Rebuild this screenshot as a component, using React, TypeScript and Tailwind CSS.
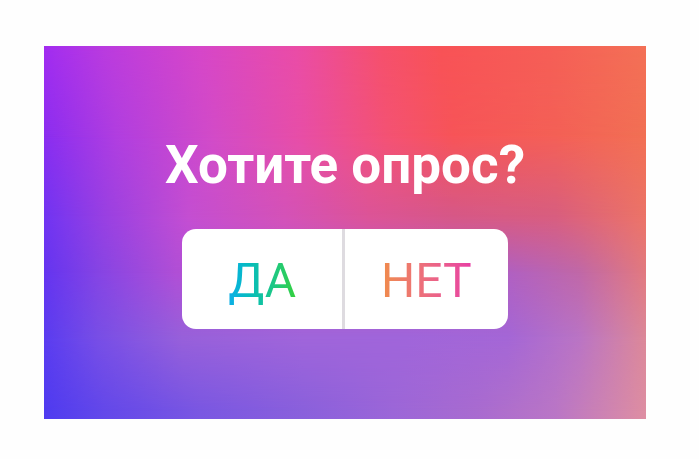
import React from 'react';

// Horizontal colour bands, from the bottom edge of the card up to the top one.
// Every band fades into the one below it through its mask.
const bands = [
  'bg-[linear-gradient(90deg,#4f3bf0_0%,#6348ea_10%,#7a57e2_26%,#8a60dc_43%,#9c66d8_58%,#a96bd0_72%,#ba76c6_85%,#de8ea2_100%)]',
  'bg-[linear-gradient(90deg,#5a3cf0_0%,#784ee6_9%,#9860da_23%,#a065da_43%,#a065da_60%,#a466d6_77%,#ba74c4_89%,#dc8898_100%)] [mask-image:linear-gradient(180deg,#000_78%,transparent_98%)]',
  'bg-[linear-gradient(90deg,#6434f0_0%,#8544e4_9%,#b04fd6_22%,#b855cc_43%,#b85ac4_60%,#b060c2_77%,#c068a8_89%,#e27a80_100%)] [mask-image:linear-gradient(180deg,#000_61%,transparent_78%)]',
  'bg-[linear-gradient(90deg,#7034f2_0%,#9840e2_10%,#c44ed2_24%,#d452b8_40%,#dc5498_54%,#d65888_68%,#d85e80_85%,#ec7468_100%)] [mask-image:linear-gradient(180deg,#000_46%,transparent_61%)]',
  'bg-[linear-gradient(90deg,#8a2df0_0%,#b03ee0_12%,#d24bc8_28%,#e84ea6_43%,#f45274_57%,#f75458_68%,#f46056_85%,#f27054_100%)] [mask-image:linear-gradient(180deg,#000_24%,transparent_46%)]',
  'bg-[linear-gradient(90deg,#a22cf0_0%,#ba3bde_10%,#d646c8_26%,#ea4ca6_42%,#f5506c_56%,#f85256_66%,#f55e56_84%,#f37056_100%)] [mask-image:linear-gradient(180deg,#000_0%,transparent_25%)]',
];

const options = [
  { label: 'ДА', gradient: 'from-[#10aee8] to-[#34d034]' },
  { label: 'НЕТ', gradient: 'from-[#f08c48] to-[#e83ca4]' },
];

const PollPage = () => {
  return (
    <main className="flex min-h-screen bg-[#fefefe] pt-[46px] pr-[53px] pb-10 pl-11 font-[Roboto,'Liberation_Sans',sans-serif]">
      <section className="relative isolate flex flex-1 flex-col items-center justify-center gap-[34px] pb-0.5">
        {bands.map((band) => (
          <div key={band} className={`absolute inset-0 -z-10 ${band}`} />
        ))}
        <h1 className="text-[53px] leading-[60px] font-bold text-white">
          Хотите опрос?
        </h1>
        <div className="grid w-[54%] grid-cols-2 divide-x-3 divide-[#dedbe0] overflow-hidden rounded-[14px] bg-white">
          {options.map(({ label, gradient }) => (
            <button
              key={label}
              type="button"
              className="flex h-[100px] items-center justify-center pt-1 text-5xl"
            >
              <span
                className={`bg-linear-to-r bg-clip-text text-transparent ${gradient}`}
              >
                {label}
              </span>
            </button>
          ))}
        </div>
      </section>
    </main>
  );
};

export default PollPage;
